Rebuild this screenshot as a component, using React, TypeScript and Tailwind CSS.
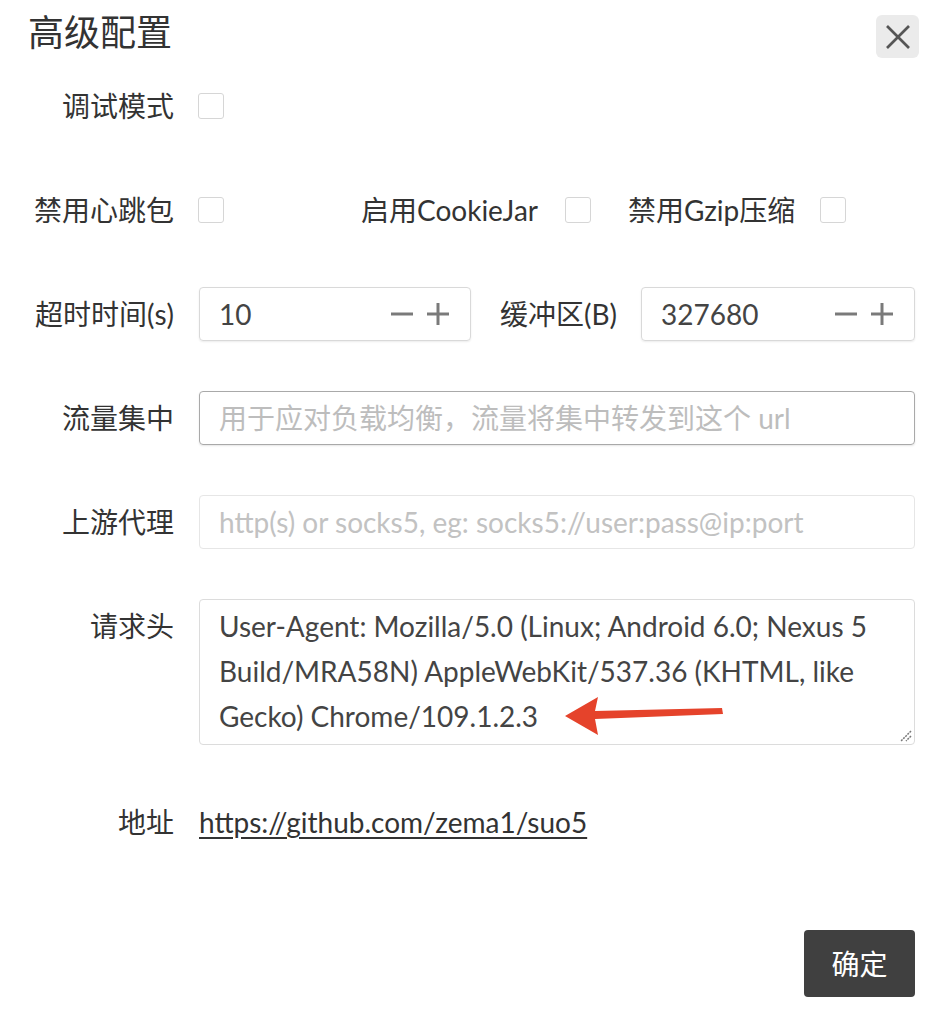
import React from "react";

function Checkbox() {
  return <div className="w-[26px] h-[26px] shrink-0 rounded-[3px] border border-[#d6d6d6] bg-white" />;
}

function Stepper() {
  return (
    <div className="flex items-center gap-[14px]">
      <svg width="22" height="22" viewBox="0 0 22 22">
        <line x1="0" y1="11" x2="22" y2="11" stroke="#7a7a7a" strokeWidth="3" />
      </svg>
      <svg width="22" height="22" viewBox="0 0 22 22">
        <line x1="0" y1="11" x2="22" y2="11" stroke="#7a7a7a" strokeWidth="3" />
        <line x1="11" y1="0" x2="11" y2="22" stroke="#7a7a7a" strokeWidth="3" />
      </svg>
    </div>
  );
}

function Label({ children, top }: { children: React.ReactNode; top?: boolean }) {
  return (
    <div className={"w-[174px] shrink-0 text-right text-[28px] text-[#333] " + (top ? "self-start pt-[6px]" : "")}>
      {children}
    </div>
  );
}

export default function App() {
  return (
    <div className="w-[952px] h-[1016px] bg-white font-['Lato','Noto_Sans_CJK_SC',sans-serif] text-[#333] flex flex-col">
      <div className="flex items-start justify-between pl-[28px] pr-[33px] pt-[15px]">
        <div className="text-[36px] leading-[34px] text-[#333]">高级配置</div>
        <div className="w-[43px] h-[43px] rounded-[6px] bg-[#ebebeb] flex items-center justify-center">
          <svg width="24" height="24" viewBox="0 0 24 24">
            <line x1="1" y1="1" x2="23" y2="23" stroke="#555" strokeWidth="2.6" />
            <line x1="23" y1="1" x2="1" y2="23" stroke="#555" strokeWidth="2.6" />
          </svg>
        </div>
      </div>

      <div className="flex flex-col gap-[50px] mt-[21px] pr-[37px]">
        <div className="flex items-center h-[54px]">
          <Label>调试模式</Label>
          <div className="ml-[24px]"><Checkbox /></div>
        </div>

        <div className="flex items-center h-[54px]">
          <Label>禁用心跳包</Label>
          <div className="ml-[24px]"><Checkbox /></div>
          <div className="ml-[137px] text-[28px]">启用CookieJar</div>
          <div className="ml-[27px]"><Checkbox /></div>
          <div className="ml-[37px] text-[28px]">禁用Gzip压缩</div>
          <div className="ml-[25px]"><Checkbox /></div>
        </div>

        <div className="flex items-center h-[54px]">
          <Label>超时时间(s)</Label>
          <div className="ml-[25px] w-[272px] h-[54px] rounded-[4px] border border-[#d9d9d9] shadow-[0_1px_2px_rgba(0,0,0,0.08)] flex items-center justify-between pl-[19px] pr-[21px] text-[28px] text-[#444]">
            <span>10</span>
            <Stepper />
          </div>
          <div className="ml-[29px] text-[28px]">缓冲区(B)</div>
          <div className="ml-[24px] flex-1 h-[54px] rounded-[4px] border border-[#d9d9d9] shadow-[0_1px_2px_rgba(0,0,0,0.08)] flex items-center justify-between pl-[19px] pr-[21px] text-[28px] text-[#444]">
            <span>327680</span>
            <Stepper />
          </div>
        </div>

        <div className="flex items-center h-[54px]">
          <Label>流量集中</Label>
          <div className="ml-[25px] flex-1 h-[54px] rounded-[4px] border border-[#a9a9a9] shadow-[0_1px_2px_rgba(0,0,0,0.1)] flex items-center pl-[19px] text-[28px] text-[#bdbdbd]">
            用于应对负载均衡，流量将集中转发到这个 url
          </div>
        </div>

        <div className="flex items-center h-[54px]">
          <Label>上游代理</Label>
          <div className="ml-[25px] flex-1 h-[54px] rounded-[4px] border border-[#e6e6e6] flex items-center pl-[19px] text-[28px] text-[#c2c2c2]">
            http(s) or socks5, eg: socks5://user:pass@ip:port
          </div>
        </div>

        <div className="flex items-start h-[146px]">
          <Label top>请求头</Label>
          <div className="relative ml-[25px] flex-1 h-[146px] rounded-[4px] border border-[#dcdcdc] pl-[19px] pt-[4px] text-[28px] leading-[45px] text-[#444] whitespace-nowrap">
            <div>User-Agent: Mozilla/5.0 (Linux; Android 6.0; Nexus 5</div>
            <div>Build/MRA58N) AppleWebKit/537.36 (KHTML, like</div>
            <div>Gecko) Chrome/109.1.2.3</div>
            <svg className="absolute right-[2px] bottom-[2px]" width="14" height="14" viewBox="0 0 14 14">
              <line x1="13" y1="3" x2="3" y2="13" stroke="#777" strokeWidth="1.5" strokeDasharray="2 1" />
              <line x1="13" y1="8" x2="8" y2="13" stroke="#777" strokeWidth="1.5" strokeDasharray="2 1" />
            </svg>
            <svg className="absolute left-[365px] top-[96px]" width="160" height="40" viewBox="0 0 160 40">
              <polygon points="0,20 33,1 30,15 157,12 158,18 30,23 33,39" fill="#e5432b" />
            </svg>
          </div>
        </div>

        <div className="flex items-center h-[54px]">
          <Label>地址</Label>
          <a className="ml-[25px] text-[28px] text-[#333] underline underline-offset-[4px]" href="#">
            https://github.com/zema1/suo5
          </a>
        </div>
      </div>

      <div className="flex justify-end pr-[37px] mt-[81px]">
        <div className="w-[111px] h-[67px] rounded-[4px] bg-[#404040] flex items-center justify-center text-[28px] text-white">
          确定
        </div>
      </div>
    </div>
  );
}
